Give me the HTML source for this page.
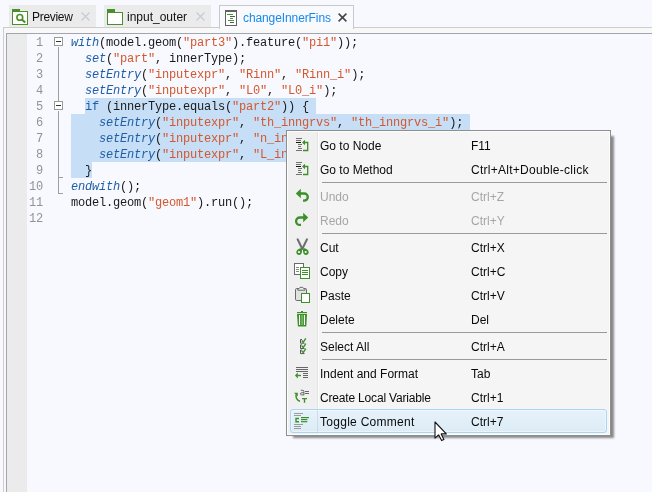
<!DOCTYPE html>
<html><head><meta charset="utf-8">
<style>
html,body{margin:0;padding:0;}
body{width:652px;height:492px;overflow:hidden;position:relative;background:#f8f9fe;font-family:"Liberation Sans",sans-serif;}
.abs{position:absolute;}
/* tabs */
.tab{position:absolute;top:5px;height:22px;background:#ebebeb;}
.tab .lbl{will-change:transform;position:absolute;top:4.5px;font-size:12px;line-height:14px;color:#111;white-space:nowrap;}
.tab.active{background:#f9fafe;border:1px solid #c9c9c9;border-bottom:none;height:23px;top:5px;}
/* editor */
#outer{position:absolute;left:3px;top:27px;right:-5px;bottom:-5px;border:1px solid #cdcdcd;background:#f8f8f8;}
#inner{position:absolute;left:6px;top:33px;right:-5px;bottom:-5px;border-left:1px solid #a2a5ad;border-top:1px solid #a2a5ad;background:#f8f9fe;}
#gutter{position:absolute;left:7px;top:34px;width:20px;bottom:0;background:#ebebeb;}
.ln{will-change:transform;position:absolute;left:27px;width:16px;text-align:right;font-family:"Liberation Mono",monospace;font-size:12px;letter-spacing:-0.2px;color:#939393;line-height:16px;}
.code{will-change:transform;position:absolute;left:71px;font-family:"Liberation Mono",monospace;font-size:12px;letter-spacing:-0.2px;line-height:16px;color:#1a1a1a;white-space:pre;}
.kw{color:#1f5fa8;font-style:italic;}
.kw2{color:#1f5fa8;}
.st{color:#d4582e;}
.sel{position:absolute;background:#c6def6;}
/* menu */
#menu{position:absolute;left:286px;top:130px;width:323px;height:304px;border:1px solid #8e8e8e;background:#f5f5f5;box-shadow:inset 0 0 0 1px #fcfcfc, 5px 4px 2px -2px rgba(0,0,0,0.45);}
#iconcol{position:absolute;left:1px;top:1px;width:29px;height:302px;background:#f0f0f0;border-right:1px solid #e2e2e2;box-shadow:1px 0 0 #fff;}
.mi{position:absolute;left:0;width:323px;height:24px;}
.mi .t{position:absolute;left:33px;top:6px;font-size:12px;color:#0a0a0a;white-space:nowrap;}
.mi .k{position:absolute;left:184px;top:6px;font-size:12px;color:#0a0a0a;white-space:nowrap;}
.mi.dis .t,.mi.dis .k{color:#a6a6a6;}
.mi svg{position:absolute;left:6px;top:4px;}
.sep{position:absolute;left:35px;width:285px;height:1px;background:#999;}
.hov{position:absolute;left:3px;top:278px;width:315px;height:22px;border:1px solid #a9d7f2;border-radius:3px;background:linear-gradient(#e7f2fa,#dcecf6);box-shadow:inset 0 0 0 1px rgba(255,255,255,0.45);}
.hov:after{content:"";position:absolute;left:26px;top:0;width:1px;height:22px;background:rgba(160,190,205,0.35);}
</style></head>
<body>
<!-- tabs -->
<div class="tab" style="left:9px;width:87px;">
  <svg class="abs" style="left:3px;top:4px" width="16" height="16" viewBox="0 0 16 16">
    <rect x="0.5" y="2.5" width="15" height="13" fill="#fff" stroke="#4a8f2a"/>
    <rect x="0" y="0" width="8" height="2" fill="#4a8f2a"/>
    <circle cx="7.8" cy="8.4" r="2.9" fill="none" stroke="#4a8f2a" stroke-width="1.6"/>
    <path d="M10.2 10.8L13.2 13.6" stroke="#4a8f2a" stroke-width="2.1"/>
  </svg>
  <div class="lbl" style="left:23px;letter-spacing:-0.3px">Preview</div>
  <svg class="abs" style="left:72px;top:7px" width="9" height="9" viewBox="0 0 9 9"><path d="M0.5 0.5L8.5 8.5M8.5 0.5L0.5 8.5" stroke="#c5ccd6" stroke-width="1.2"/></svg>
</div>
<div class="tab" style="left:104px;width:107px;">
  <svg class="abs" style="left:3px;top:4px" width="16" height="16" viewBox="0 0 16 16">
    <rect x="0.5" y="3.5" width="15" height="12" fill="#fff" stroke="#4a8f2a"/>
    <rect x="0" y="0" width="8" height="3" fill="#4a8f2a"/>
  </svg>
  <div class="lbl" style="left:23px">input_outer</div>
  <svg class="abs" style="left:92px;top:7px" width="9" height="9" viewBox="0 0 9 9"><path d="M0.5 0.5L8.5 8.5M8.5 0.5L0.5 8.5" stroke="#c5ccd6" stroke-width="1.2"/></svg>
</div>

<div id="outer"></div>
<div class="tab active" style="left:219px;width:133px;">
  <svg class="abs" style="left:5px;top:4px" width="12" height="16" viewBox="0 0 12 16">
    <rect x="0.5" y="1" width="11" height="14.5" fill="#fff" stroke="#616161"/>
    <rect x="0" y="0" width="12" height="2" fill="#616161"/>
    <rect x="2" y="4" width="6" height="1" fill="#3f9a2a"/>
    <rect x="5" y="6" width="5" height="1" fill="#555"/>
    <rect x="5" y="8" width="3" height="1" fill="#3f9a2a"/>
    <rect x="3" y="10" width="6" height="1" fill="#3f9a2a"/>
    <rect x="5" y="12" width="4" height="1" fill="#555"/>
  </svg>
  <div class="lbl" style="left:23px;letter-spacing:-0.1px;color:#1789ee">changeInnerFins</div>
  <svg class="abs" style="left:118px;top:7px" width="9" height="9" viewBox="0 0 9 9"><path d="M0.6 0.6L8.4 8.4M8.4 0.6L0.6 8.4" stroke="#444" stroke-width="1.5"/></svg>
</div>
<div id="inner"></div>
<div id="gutter"></div>

<!-- selection -->
<div class="sel" style="left:85px;top:98px;width:231px;height:16px"></div>
<div class="sel" style="left:71px;top:114px;width:399px;height:16px"></div>
<div class="sel" style="left:71px;top:130px;width:392px;height:32px"></div>
<div class="sel" style="left:71px;top:162px;width:21px;height:16px"></div>

<!-- fold -->
<svg class="abs" style="left:50px;top:34px" width="20" height="180" viewBox="0 0 20 180">
  <rect x="4.5" y="3.5" width="8" height="8" fill="#fff" stroke="#9a9a9a"/>
  <path d="M6 7.5h5" stroke="#333"/>
  <rect x="4.5" y="67.5" width="8" height="8" fill="#fff" stroke="#9a9a9a"/>
  <path d="M6 71.5h5" stroke="#333"/>
  <path d="M8.5 13v54M8.5 77v83M8.5 143.5h4.5M8.5 159.5h4.5" stroke="#9f9f9f" fill="none"/>
</svg>

<!-- line numbers -->
<div class="ln" style="top:35px">1</div>
<div class="ln" style="top:51px">2</div>
<div class="ln" style="top:67px">3</div>
<div class="ln" style="top:83px">4</div>
<div class="ln" style="top:99px">5</div>
<div class="ln" style="top:115px">6</div>
<div class="ln" style="top:131px">7</div>
<div class="ln" style="top:147px">8</div>
<div class="ln" style="top:163px">9</div>
<div class="ln" style="top:179px">10</div>
<div class="ln" style="top:195px">11</div>
<div class="ln" style="top:211px">12</div>

<!-- code -->
<div class="code" style="top:35px"><span class="kw">with</span>(model.geom(<span class="st">"part3"</span>).feature(<span class="st">"pi1"</span>));
  <span class="kw">set</span>(<span class="st">"part"</span>, innerType);
  <span class="kw">setEntry</span>(<span class="st">"inputexpr"</span>, <span class="st">"Rinn"</span>, <span class="st">"Rinn_i"</span>);
  <span class="kw">setEntry</span>(<span class="st">"inputexpr"</span>, <span class="st">"L0"</span>, <span class="st">"L0_i"</span>);
  <span class="kw2">if</span> (innerType.equals(<span class="st">"part2"</span>)) {
    <span class="kw">setEntry</span>(<span class="st">"inputexpr"</span>, <span class="st">"th_inngrvs"</span>, <span class="st">"th_inngrvs_i"</span>);
    <span class="kw">setEntry</span>(<span class="st">"inputexpr"</span>, <span class="st">"n_inngrvs"</span>, <span class="st">"n_inngrvs_i"</span>);
    <span class="kw">setEntry</span>(<span class="st">"inputexpr"</span>, <span class="st">"L_inngrvs"</span>, <span class="st">"L_inngrvs_i"</span>);
  }
<span class="kw">endwith</span>();
model.geom(<span class="st">"geom1"</span>).run();
</div>

<!-- context menu -->
<div id="menu">
  <div id="iconcol"></div>
  <div class="hov"></div>
  <div class="mi" style="top:2px"><div class="t">Go to Node</div><div class="k">F11</div></div>
  <div class="mi" style="top:26px"><div class="t">Go to Method</div><div class="k" style="letter-spacing:0.27px">Ctrl+Alt+Double-click</div></div>
  <div class="sep" style="top:51px"></div>
  <div class="mi dis" style="top:53px"><div class="t">Undo</div><div class="k">Ctrl+Z</div></div>
  <div class="mi dis" style="top:77px"><div class="t">Redo</div><div class="k">Ctrl+Y</div></div>
  <div class="sep" style="top:102px"></div>
  <div class="mi" style="top:104px"><div class="t">Cut</div><div class="k">Ctrl+X</div></div>
  <div class="mi" style="top:128px"><div class="t">Copy</div><div class="k">Ctrl+C</div></div>
  <div class="mi" style="top:152px"><div class="t">Paste</div><div class="k">Ctrl+V</div></div>
  <div class="mi" style="top:176px"><div class="t">Delete</div><div class="k">Del</div></div>
  <div class="sep" style="top:201px"></div>
  <div class="mi" style="top:203px"><div class="t">Select All</div><div class="k">Ctrl+A</div></div>
  <div class="sep" style="top:228px"></div>
  <div class="mi" style="top:230px"><div class="t">Indent and Format</div><div class="k">Tab</div></div>
  <div class="mi" style="top:254px"><div class="t" style="letter-spacing:-0.18px">Create Local Variable</div><div class="k">Ctrl+1</div></div>
  <div class="mi" style="top:278px"><div class="t" style="letter-spacing:0.28px">Toggle Comment</div><div class="k">Ctrl+7</div></div>
</div>


<!-- menu icons -->
<svg class="abs" style="left:293px;top:135px" width="20" height="20" viewBox="0 0 20 20">
  <rect x="3" y="3" width="6" height="1" fill="#707070"/><rect x="3" y="5" width="5" height="1" fill="#707070"/>
  <rect x="3" y="7" width="5" height="1" fill="#111"/><rect x="5" y="9" width="4" height="1" fill="#707070"/>
  <rect x="5" y="11" width="3" height="1" fill="#707070"/><rect x="5" y="13" width="4" height="1" fill="#707070"/>
  <rect x="3" y="15" width="6" height="1" fill="#707070"/>
  <path d="M9 7.5L12 4.8V10.2Z" fill="#3d8f29"/><path d="M11.5 7.5H14.7V15.5H10" fill="none" stroke="#3d8f29" stroke-width="1.3"/>
</svg>
<svg class="abs" style="left:293px;top:159px" width="20" height="20" viewBox="0 0 20 20">
  <rect x="3" y="3" width="6" height="1" fill="#707070"/><rect x="3" y="5" width="5" height="1" fill="#707070"/>
  <rect x="3" y="7" width="5" height="1" fill="#111"/><rect x="5" y="9" width="4" height="1" fill="#707070"/>
  <rect x="5" y="11" width="3" height="1" fill="#707070"/><rect x="5" y="13" width="4" height="1" fill="#707070"/>
  <rect x="3" y="15" width="6" height="1" fill="#707070"/>
  <path d="M9 7.5L12 4.8V10.2Z" fill="#3d8f29"/><path d="M11.5 7.5H14.7V15.5H10" fill="none" stroke="#3d8f29" stroke-width="1.3"/>
</svg>
<svg class="abs" style="left:293px;top:186px" width="20" height="20" viewBox="0 0 20 20">
  <path d="M2.8 7.5L7.8 2.8V12.2Z" fill="#3d8f29"/>
  <path d="M7 7.5H11.2A3.6 3.6 0 0 1 11.2 14.7H10" fill="none" stroke="#3d8f29" stroke-width="2.3"/>
</svg>
<svg class="abs" style="left:293px;top:210px" width="20" height="20" viewBox="0 0 20 20">
  <path d="M15.2 7.5L10.2 2.8V12.2Z" fill="#3d8f29"/>
  <path d="M11 7.5H6.8A3.7 3.7 0 0 0 6.8 14.9H8" fill="none" stroke="#3d8f29" stroke-width="2.3"/>
</svg>
<svg class="abs" style="left:293px;top:237px" width="20" height="20" viewBox="0 0 20 20">
  <path d="M4.6 2.3L9.3 12M14 2.3L9.3 12" fill="none" stroke="#6e6e6e" stroke-width="2" stroke-linecap="round"/>
  <path d="M8.6 11.2C7 11 3.6 12.5 3.3 15C3.2 17 4.8 18 6.3 17.9C8.8 17.7 9.6 14 8.6 11.2Z" fill="#3d8f29"/>
  <path d="M10.4 11.2C12 11 15.4 12.5 15.7 15C15.8 17 14.2 18 12.7 17.9C10.2 17.7 9.4 14 10.4 11.2Z" fill="#3d8f29"/>
  <circle cx="6" cy="15" r="1.1" fill="#fff"/><circle cx="12.7" cy="15" r="1.1" fill="#fff"/>
</svg>
<svg class="abs" style="left:293px;top:261px" width="20" height="20" viewBox="0 0 20 20">
  <rect x="1.5" y="2.5" width="9" height="11" fill="#fff" stroke="#6a6a6a"/>
  <rect x="3" y="6" width="3" height="1" fill="#888"/><rect x="3" y="8" width="3" height="1" fill="#888"/><rect x="3" y="10" width="3" height="1" fill="#888"/>
  <rect x="7.5" y="6.5" width="9" height="11" fill="#fff" stroke="#3d8f29"/>
  <rect x="9" y="9" width="6" height="1" fill="#3d8f29"/><rect x="9" y="11" width="6" height="1" fill="#3d8f29"/><rect x="9" y="13" width="6" height="1" fill="#3d8f29"/>
</svg>
<svg class="abs" style="left:293px;top:285px" width="20" height="20" viewBox="0 0 20 20">
  <rect x="2.5" y="3.5" width="11" height="12" rx="1.2" fill="#e2e2e2" stroke="#6a6a6a"/>
  <path d="M4.7 5.2V3.5H6.2L7 2.3H9.8L10.6 3.5H12V5.2Z" fill="#f0f0f0" stroke="#6a6a6a" stroke-width="1"/>
  <rect x="8.5" y="8.5" width="8" height="9" fill="#fff" stroke="#3d8f29"/>
</svg>
<svg class="abs" style="left:293px;top:309px" width="20" height="20" viewBox="0 0 20 20">
  <rect x="4" y="3" width="10" height="1.2" fill="#3d8f29"/><rect x="8" y="2" width="2" height="1.5" fill="#3d8f29"/>
  <path d="M4 5H14L13.3 17.6H4.9Z" fill="#3d8f29"/>
  <rect x="6" y="6" width="1.1" height="10" fill="#fff"/><rect x="10.9" y="6" width="1.1" height="10" fill="#fff"/>
  <rect x="8.5" y="6" width="1.1" height="10" fill="#9cc48f"/>
</svg>
<svg class="abs" style="left:293px;top:336px" width="20" height="20" viewBox="0 0 20 20">
  <path d="M9 3.5H7.5V7.2H11.5M9 8.9H7.5V12.5H11.5M9 14H7.5V17.6H11.5" fill="none" stroke="#555" stroke-width="1"/>
  <path d="M8.8 4.5L10.2 6.3L12.8 2.3M8.8 9.8L10.2 11.6L12.8 7.6M8.8 14.8L10.2 16.6L12.8 12.6" fill="none" stroke="#3d8f29" stroke-width="1.4"/>
</svg>
<svg class="abs" style="left:293px;top:363px" width="20" height="20" viewBox="0 0 20 20">
  <rect x="3" y="4" width="12" height="1" fill="#666"/><rect x="3" y="6" width="12" height="1" fill="#666"/><rect x="3" y="8" width="12" height="1" fill="#666"/>
  <rect x="10" y="10" width="5" height="1" fill="#666"/><rect x="10" y="12" width="5" height="1" fill="#666"/><rect x="10" y="14" width="5" height="1" fill="#666"/>
  <path d="M2 12.5L4.8 9.6V15.4Z" fill="#3d8f29"/><rect x="4.5" y="11.8" width="3.5" height="1.4" fill="#3d8f29"/>
</svg>
<svg class="abs" style="left:293px;top:387px" width="20" height="20" viewBox="0 0 20 20">
  <path d="M7.8 3.3H9.9Q10.9 3.3 10.9 4.4V8.2M10.9 5.7H8.7Q7.5 5.7 7.5 6.9Q7.5 7.9 8.7 7.9H10.9" fill="none" stroke="#666" stroke-width="1"/>
  <rect x="12" y="4" width="4" height="1" fill="#666"/><rect x="12" y="6" width="4" height="1" fill="#666"/>
  <path d="M9 11.6H14M11.5 11.6V15.8" fill="none" stroke="#3d8f29" stroke-width="1.4"/>
  <path d="M1 5.8H4.8V9.5Z" fill="#3d8f29"/>
  <path d="M3 7.5C2.8 11 4.5 13.6 7 14.3" fill="none" stroke="#3d8f29" stroke-width="1.5"/>
</svg>
<svg class="abs" style="left:293px;top:411px" width="20" height="20" viewBox="0 0 20 20">
  <rect x="1" y="2" width="9" height="1" fill="#9b9b9b"/><rect x="1" y="4" width="7" height="1" fill="#9b9b9b"/>
  <path d="M6 7.5H3V10.8H6" fill="none" stroke="#3d8f29" stroke-width="1.4"/>
  <rect x="8" y="6" width="8" height="1.2" fill="#3d8f29"/><rect x="8" y="8" width="6.3" height="1.2" fill="#3d8f29"/><rect x="8" y="10.1" width="6.3" height="1.2" fill="#3d8f29"/>
  <rect x="1" y="13" width="9" height="1" fill="#9b9b9b"/><rect x="1" y="15" width="7" height="1" fill="#9b9b9b"/><rect x="1" y="17" width="7" height="1" fill="#9b9b9b"/>
</svg>

<!-- cursor -->
<svg class="abs" style="left:434px;top:421px" width="14" height="21" viewBox="0 0 14 21">
  <path d="M1 1V17.2L4.6 13.8L7.6 19.6L9.9 18.5L7.2 12.9H12.3Z" fill="#fff" stroke="#111" stroke-width="1.1" stroke-linejoin="round"/>
</svg>
</body></html>
